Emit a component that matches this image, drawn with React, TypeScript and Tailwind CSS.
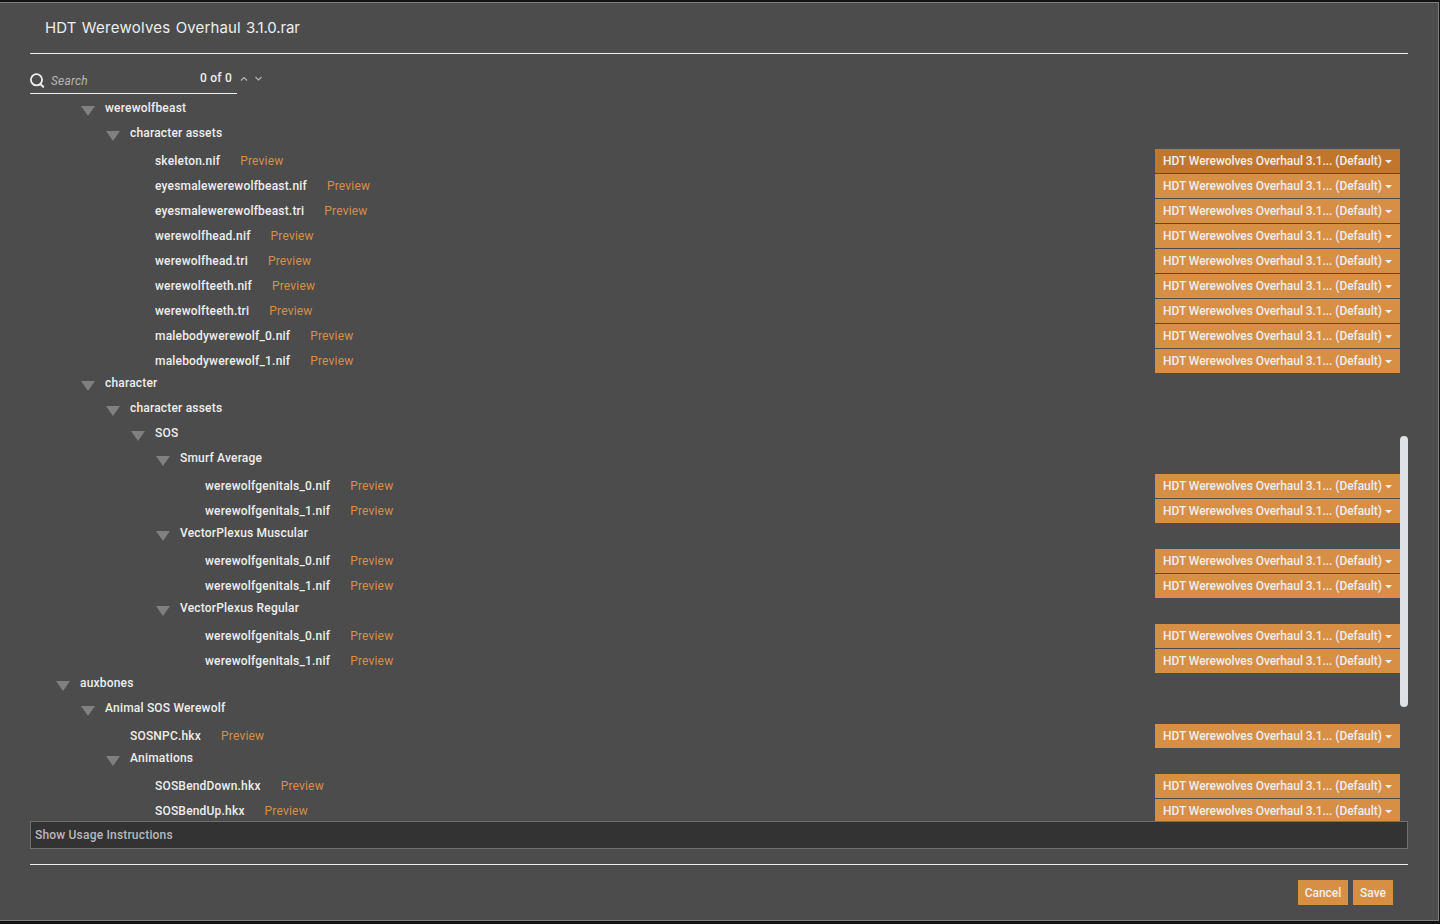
import React from 'react';

type Node = { name: string; depth: number; file?: boolean; active?: boolean };

const folder = (name: string, depth: number): Node => ({ name, depth });
const file = (name: string, depth: number, active = false): Node => ({ name, depth, file: true, active });

const NODES: Node[] = [
  folder('werewolfbeast', 1),
  folder('character assets', 2),
  file('skeleton.nif', 3, true),
  file('eyesmalewerewolfbeast.nif', 3),
  file('eyesmalewerewolfbeast.tri', 3),
  file('werewolfhead.nif', 3),
  file('werewolfhead.tri', 3),
  file('werewolfteeth.nif', 3),
  file('werewolfteeth.tri', 3),
  file('malebodywerewolf_0.nif', 3),
  file('malebodywerewolf_1.nif', 3),
  folder('character', 1),
  folder('character assets', 2),
  folder('SOS', 3),
  folder('Smurf Average', 4),
  file('werewolfgenitals_0.nif', 5),
  file('werewolfgenitals_1.nif', 5),
  folder('VectorPlexus Muscular', 4),
  file('werewolfgenitals_0.nif', 5),
  file('werewolfgenitals_1.nif', 5),
  folder('VectorPlexus Regular', 4),
  file('werewolfgenitals_0.nif', 5),
  file('werewolfgenitals_1.nif', 5),
  folder('auxbones', 0),
  folder('Animal SOS Werewolf', 1),
  file('SOSNPC.hkx', 2),
  folder('Animations', 2),
  file('SOSBendDown.hkx', 3),
  file('SOSBendUp.hkx', 3),
];

const INDENT = ['pl-[50px]', 'pl-[75px]', 'pl-[100px]', 'pl-[125px]', 'pl-[150px]', 'pl-[175px]'];

function ProviderButton({ active }: { active?: boolean }) {
  return (
    <button
      className={`flex h-6 w-[245px] shrink-0 items-center pl-2 text-left font-medium tracking-[-0.065px] whitespace-nowrap text-[#eeeeee] ${
        active ? 'bg-[#c1762b]' : 'bg-[#d78f46]'
      }`}
    >
      <span className="w-[222px]">HDT Werewolves Overhaul 3.1... (Default)</span>
      <svg width="7" height="4" viewBox="0 0 7 4" className="mt-px fill-[#eeeeee]">
        <path d="M0 0h7L3.5 3.5z" />
      </svg>
    </button>
  );
}

function TreeRow({ node }: { node: Node }) {
  if (node.file) {
    return (
      <li className={`flex h-[25px] shrink-0 items-start ${INDENT[node.depth]}`}>
        <div className="flex h-6 flex-1 items-center gap-5">
          <span className="font-medium">{node.name}</span>
          <a className="text-[#d78f46]">Preview</a>
        </div>
        <ProviderButton active={node.active} />
      </li>
    );
  }
  return (
    <li className={`flex h-[25px] shrink-0 items-start ${INDENT[node.depth]}`}>
      <svg width="14" height="10" viewBox="0 0 14 10" className="mt-[7px] mr-[10px] -ml-6 shrink-0 fill-[#808080]">
        <path d="M0 0h14L7 10z" />
      </svg>
      <span className="leading-[18px] font-medium">{node.name}</span>
    </li>
  );
}

export default function App() {
  return (
    <div className="h-[924px] w-[1440px] overflow-hidden bg-[#131313] pt-[2px] font-['Roboto',sans-serif] text-[12px] tracking-[0.19px] text-[#eeeeee]">
      <div className="flex h-[919px] w-[1439px] flex-col border-y border-r border-[#7f7f7f] bg-[#4c4c4c] pr-[30px] pl-[30px]">
        <header className="flex h-[51px] shrink-0 items-center border-b border-[#eeeeee] pl-[15px]">
          <h1 className="font-['Inter',sans-serif] text-[15px] tracking-[0.1px] whitespace-nowrap [word-spacing:1px]">
            HDT <span className="tracking-[0.25px]">Werewolves</span> Overhaul{' '}
            <span className="tracking-[-0.15px]">3.1.0.rar</span>
          </h1>
        </header>

        <div className="flex h-10 w-[207px] shrink-0 items-end border-b border-[#eeeeee]">
          <svg width="15" height="15" viewBox="0 0 15 15" fill="none" stroke="#eeeeee" strokeWidth="1.8" className="mb-[5px] shrink-0">
            <circle cx="6.5" cy="6.8" r="5.6" />
            <path d="M10.2 10.8l3.6 3.6" strokeWidth="2" />
          </svg>
          <span className="mb-[3px] ml-[6px] w-[149px] shrink-0 leading-[18px] text-[#b5b5b5] italic">Search</span>
          <span className="mb-[6px] w-[40px] shrink-0 leading-[18px] font-medium tracking-[0.25px] whitespace-nowrap">0 of 0</span>
          <svg width="24" height="6" viewBox="0 0 24 6" fill="none" stroke="#b5b5b5" strokeWidth="1.2" className="mb-[11px] shrink-0">
            <path d="M1 4.5l3-3 3 3M15.5 1l3 3 3-3" />
          </svg>
        </div>

        <div className="flex h-[727px] shrink-0 overflow-hidden">
          <ul className="flex flex-1 flex-col pt-[5px]">
            {NODES.map((node, i) => (
              <TreeRow key={i} node={node} />
            ))}
          </ul>
          <div className="w-2 pt-[342px]">
            <div className="h-[271px] rounded-full bg-[#dee2e6]" />
          </div>
        </div>

        <div className="flex h-7 shrink-0 items-center border border-[#6f6f6f] bg-[#333333] pl-1 font-medium text-[#b9b9b9]">
          Show Usage Instructions
        </div>

        <footer className="mt-[15px] flex justify-end gap-[5px] border-t border-[#eeeeee] pt-[15px] pr-[15px]">
          <button className="h-[25px] w-[50px] bg-[#d78f46] font-medium tracking-normal">Cancel</button>
          <button className="h-[25px] w-[40px] bg-[#d78f46] font-medium tracking-normal">Save</button>
        </footer>
      </div>
    </div>
  );
}
